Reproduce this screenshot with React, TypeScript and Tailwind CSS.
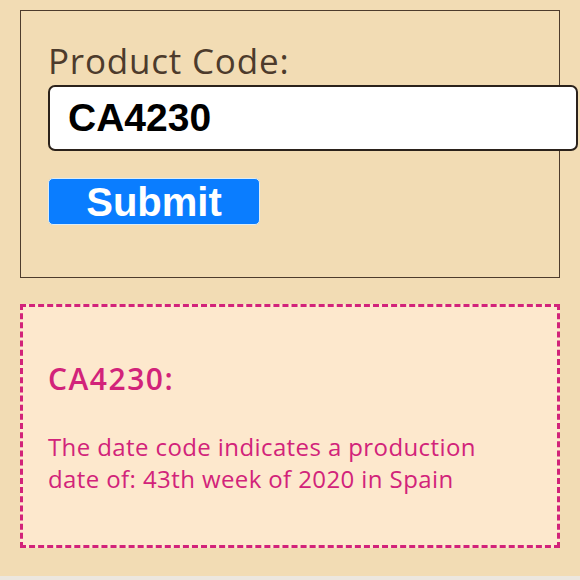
export default function App() {
  return (
    <main className="h-[580px] w-[580px] overflow-hidden bg-[#ece7df]">
      <div className="h-[576px] bg-[#f2dcb4] px-5 pt-[10px] font-['Open_Sans',sans-serif]">
        <form
          className="flex h-[268px] w-[540px] flex-col items-start border border-[#4d3b2c] pl-[27px] pt-[32px]"
          onSubmit={(e) => e.preventDefault()}
        >
          <label
            htmlFor="code"
            className="text-[35px] leading-none tracking-[0.8px] text-[#4d3b2c]"
          >
            Product Code:
          </label>
          <input
            id="code"
            type="text"
            defaultValue="CA4230"
            className="mt-[7px] h-[66px] w-[530px] shrink-0 rounded-[7px] border-2 border-[#2b221b] bg-white pl-[18px] font-['Liberation_Sans',sans-serif] text-[39px] font-bold text-black outline-none"
          />
          <button
            type="submit"
            className="mt-[27px] h-[47px] w-[212px] rounded-[5px] border border-[#dcecf7] bg-[#0a7dff] font-['Liberation_Sans',sans-serif] text-[40px] leading-none font-bold text-white"
          >
            Submit
          </button>
        </form>
        <section className="mt-[26px] h-[244px] w-[540px] border-[3px] border-dashed border-[#d2237a] bg-[#fde8cd] pl-[25px] pt-[57px] text-[#d2237a]">
          <h2 className="text-[30px] leading-none font-semibold tracking-[1.5px]">
            CA4230:
          </h2>
          <p className="mt-[37px] text-[24px] leading-[32px] tracking-[0.4px]">
            The date code indicates a production
            <br />
            date of: 43th week of 2020 in Spain
          </p>
        </section>
      </div>
    </main>
  );
}
